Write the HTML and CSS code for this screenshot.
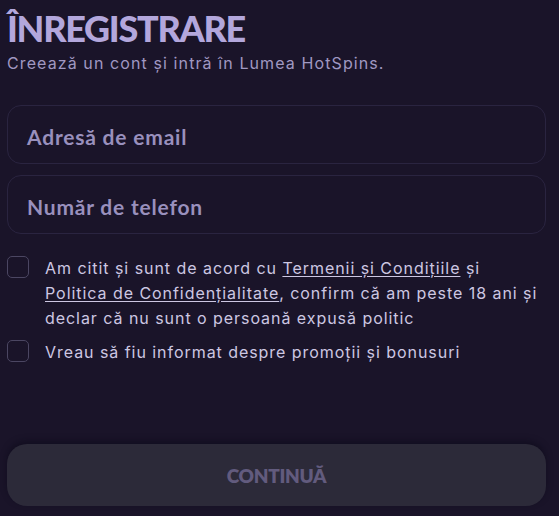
FILE: index.html
```html
<!DOCTYPE html>
<html lang="ro">
<head>
<meta charset="utf-8">
<link rel="stylesheet" href="styles.css">
</head>
<body>
<main class="form">
  <h1 class="title">ÎNREGISTRARE</h1>
  <p class="subtitle">Creează un cont și intră în Lumea HotSpins.</p>
  <div class="fields">
    <div class="field"><span class="placeholder">Adresă de email</span></div>
    <div class="field"><span class="placeholder">Număr de telefon</span></div>
  </div>
  <div class="checks">
    <label class="check">
      <span class="box"></span>
      <span class="check-text">Am citit și sunt de acord cu <a class="link">Termenii și Condițiile</a> și <a class="link">Politica de Confidențialitate</a>, confirm că am peste 18 ani și declar că nu sunt o persoană expusă politic</span>
    </label>
    <label class="check">
      <span class="box"></span>
      <span class="check-text">Vreau să fiu informat despre promoții și bonusuri</span>
    </label>
  </div>
  <button class="submit">CONTINUĂ</button>
</main>
</body>
</html>
```
FILE: styles.css
```css
html, body {
  margin: 0;
  padding: 0;
  background: #1a1429;
}
body {
  width: 559px;
  height: 516px;
  overflow: hidden;
}
.form {
  padding: 0 13px 0 7px;
  display: flex;
  flex-direction: column;
}
.title {
  margin: 0;
  padding-top: 6px;
  font-family: "Lato", sans-serif;
  font-weight: 900;
  font-size: 36px;
  line-height: 44px;
  color: #b3a7dc;
  letter-spacing: -1.3px;
}
.subtitle {
  margin: 3px 0 0;
  font-family: "Inter", sans-serif;
  font-size: 16px;
  line-height: 20px;
  color: #a098c2;
  letter-spacing: 1.1px;
}
.fields {
  margin-top: 32px;
  display: flex;
  flex-direction: column;
  gap: 11px;
}
.field {
  height: 57px;
  border: 1px solid #2a2440;
  border-radius: 14px;
  display: flex;
  align-items: center;
  padding-left: 19px;
}
.placeholder {
  font-family: "Lato", sans-serif;
  font-weight: 700;
  font-size: 21px;
  letter-spacing: 0.8px;
  color: #9990bd;
  margin-top: 3px;
}
.checks {
  margin-top: 21px;
  display: flex;
  flex-direction: column;
  gap: 8px;
}
.check {
  display: flex;
  align-items: flex-start;
  gap: 16px;
}
.box {
  flex: none;
  width: 20px;
  height: 20px;
  border: 1px solid #4b4662;
  border-radius: 5px;
  margin-top: 1px;
}
.check-text {
  font-family: "Inter", sans-serif;
  font-size: 16px;
  line-height: 25px;
  color: #cdc7e2;
  letter-spacing: 0.95px;
  margin-top: 1px;
}
.link {
  color: #cdc7e2;
  text-decoration: underline;
  text-underline-offset: 2px;
}
.submit {
  margin-top: 79px;
  height: 62px;
  border: none;
  border-radius: 20px;
  background: #2c2a39;
  box-shadow: 0 -3px 6px rgba(10, 8, 24, 0.5);
  font-family: "Lato", sans-serif;
  font-weight: 800;
  font-size: 19px;
  color: #625b7e;
  letter-spacing: -0.3px;
}
```
